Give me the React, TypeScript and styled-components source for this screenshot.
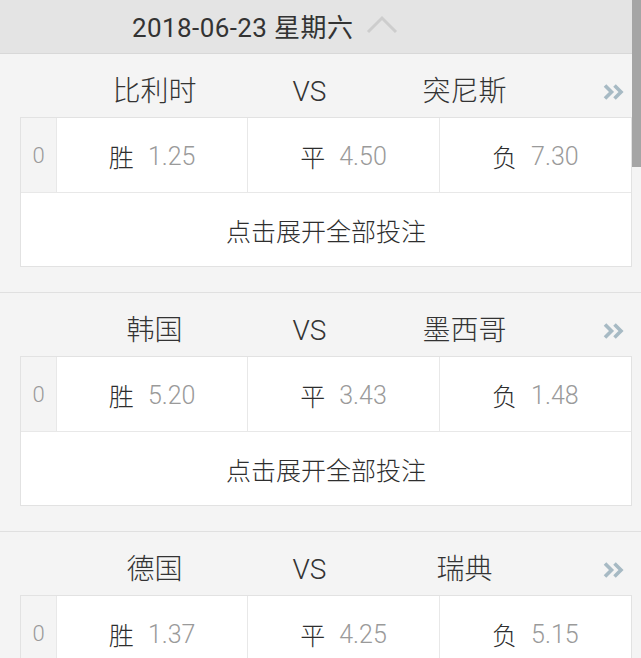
import React from "react";
import styled, { createGlobalStyle } from "styled-components";

const GlobalStyle = createGlobalStyle`
  html, body { margin: 0; padding: 0; height: 100%; overflow: hidden; }
  body { font-family: "Roboto", "Noto Sans CJK SC", sans-serif; background: #f4f4f4; }
`;

const Page = styled.div`
  position: relative;
  height: 100vh;
  overflow: hidden;
  background: #f4f4f4;
`;

const ScrollThumb = styled.div`
  position: absolute;
  top: 0;
  right: 0;
  width: 9px;
  height: 167px;
  background: #a5a5a5;
`;

const DayHeader = styled.div`
  height: 53px;
  display: flex;
  align-items: center;
  padding-left: 132px;
  background: #e4e4e4;
  border-bottom: 1px solid #d8d8d8;
  color: #333;
  font-size: 26px;
`;

const DateText = styled.span`
  letter-spacing: 0.4px;
  margin-top: -2px;
`;

const Section = styled.section<{ $first?: boolean }>`
  border-top: ${(p) => (p.$first ? "none" : "1px solid #e0e0e0")};
  padding-bottom: 25px;
`;

const TeamRow = styled.div`
  display: flex;
  align-items: center;
  height: 63px;
  padding: 14px 17px 1px 77px;
  box-sizing: border-box;
  color: #333;
  font-size: 28px;
  font-weight: 300;
  line-height: 48px;
`;

const Team = styled.div`
  width: 155px;
  text-align: center;
`;

const More = styled.div`
  margin-left: auto;
  display: flex;
  align-items: center;
`;

const Card = styled.div`
  margin: 0 9px 0 20px;
  background: #fff;
  border: 1px solid #e2e2e2;
`;

const OddsRow = styled.div`
  display: grid;
  grid-template-columns: 36px 1fr 1fr 1fr;
  height: 74px;
  border-bottom: 1px solid #e8e8e8;
`;

const IndexCell = styled.div`
  display: flex;
  align-items: center;
  justify-content: center;
  background: #f4f4f4;
  color: #9a9a9a;
  font-size: 22px;
  font-weight: 300;
  border-right: 1px solid #e8e8e8;
`;

const OddsCell = styled.div<{ $last?: boolean }>`
  display: flex;
  align-items: center;
  justify-content: center;
  border-right: ${(p) => (p.$last ? "none" : "1px solid #e8e8e8")};
  font-size: 25px;
  font-weight: 300;
  padding-top: 2px;
`;

const OddsLabel = styled.span`
  color: #2e2e2e;
`;

const OddsValue = styled.span`
  color: #9a9a9a;
  margin-left: 14px;
`;

const ExpandRow = styled.div`
  height: 73px;
  display: flex;
  align-items: center;
  justify-content: center;
  color: #2e2e2e;
  font-size: 25px;
  font-weight: 300;
`;

const ChevronUp = () => (
  <svg width="32" height="20" viewBox="0 0 32 20" style={{ marginLeft: 13, marginTop: -4 }}>
    <polyline points="2,17 16,3 30,17" fill="none" stroke="#cdcdcd" strokeWidth="3" />
  </svg>
);

const DoubleArrow = () => (
  <svg width="21" height="18" viewBox="0 0 21 18">
    <polyline points="2,2.5 8.5,9 2,15.5" fill="none" stroke="#a7bac4" strokeWidth="3.6" />
    <polyline points="11.5,2.5 18,9 11.5,15.5" fill="none" stroke="#a7bac4" strokeWidth="3.6" />
  </svg>
);

type Match = { home: string; away: string; odds: [string, string, string] };

const matches: Match[] = [
  { home: "比利时", away: "突尼斯", odds: ["1.25", "4.50", "7.30"] },
  { home: "韩国", away: "墨西哥", odds: ["5.20", "3.43", "1.48"] },
  { home: "德国", away: "瑞典", odds: ["1.37", "4.25", "5.15"] },
];

const labels = ["胜", "平", "负"];

export default function App() {
  return (
    <>
      <GlobalStyle />
      <Page>
        <DayHeader>
          <DateText>2018-06-23 星期六</DateText>
          <ChevronUp />
        </DayHeader>
        {matches.map((m, i) => (
          <Section key={m.home} $first={i === 0}>
            <TeamRow>
              <Team>{m.home}</Team>
              <Team>VS</Team>
              <Team>{m.away}</Team>
              <More>
                <DoubleArrow />
              </More>
            </TeamRow>
            <Card>
              <OddsRow>
                <IndexCell>0</IndexCell>
                {m.odds.map((o, k) => (
                  <OddsCell key={k} $last={k === 2}>
                    <OddsLabel>{labels[k]}</OddsLabel>
                    <OddsValue>{o}</OddsValue>
                  </OddsCell>
                ))}
              </OddsRow>
              <ExpandRow>点击展开全部投注</ExpandRow>
            </Card>
          </Section>
        ))}
        <ScrollThumb />
      </Page>
    </>
  );
}
